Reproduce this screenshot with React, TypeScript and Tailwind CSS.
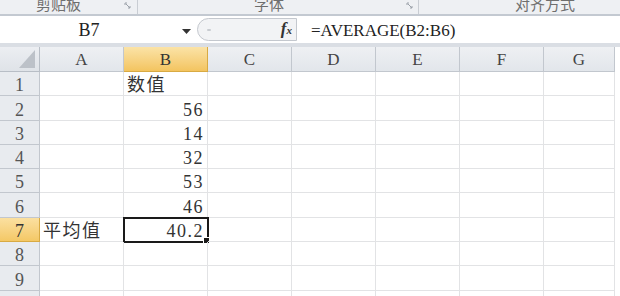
import React from "react";

const cols = ["A", "B", "C", "D", "E", "F", "G"];
const colW = [84, 84, 84, 84, 84, 84, 71];

type Cell = { text: string; align: "left" | "right" };
const data: Record<number, Record<string, Cell>> = {
  1: { B: { text: "数值", align: "left" } },
  2: { B: { text: "56", align: "right" } },
  3: { B: { text: "14", align: "right" } },
  4: { B: { text: "32", align: "right" } },
  5: { B: { text: "53", align: "right" } },
  6: { B: { text: "46", align: "right" } },
  7: { A: { text: "平均值", align: "left" }, B: { text: "40.2", align: "right" } },
};

function Launcher() {
  return (
    <svg width="7" height="7" viewBox="0 0 7 7" className="mt-[2px]">
      <path d="M1 1 H3 M1 1 V3" stroke="#9aa0a8" strokeWidth="1" fill="none" />
      <path d="M2 2 L6 6 M4 6 H6 V4" stroke="#9aa0a8" strokeWidth="1" fill="none" />
    </svg>
  );
}

export default function App() {
  const rows = [1, 2, 3, 4, 5, 6, 7, 8, 9, 10];
  return (
    <div className="w-[620px] h-[296px] overflow-hidden bg-white font-[Liberation_Serif,Noto_Sans_CJK_SC,serif]">
      {/* ribbon group labels */}
      <div className="h-[14px] flex bg-[#eef0f3] border-b-2 border-[#c3c9d1] box-content overflow-hidden font-[Noto_Sans_CJK_SC,sans-serif] text-[15px] text-[#6e6e6e]">
        <div className="w-[138px] flex border-r border-[#c9cdd3]">
          <div className="w-[117px] flex justify-center">
            <span className="leading-[15px] -mt-[4px]">剪贴板</span>
          </div>
          <div className="flex-1 flex justify-center">
            <Launcher />
          </div>
        </div>
        <div className="w-[281px] flex border-r border-[#c9cdd3]">
          <div className="w-[262px] flex justify-center">
            <span className="leading-[15px] -mt-[4px]">字体</span>
          </div>
          <div className="flex-1 flex justify-center">
            <Launcher />
          </div>
        </div>
        <div className="flex-1 flex pl-[96px]">
          <span className="leading-[15px] -mt-[4px]">对齐方式</span>
        </div>
      </div>

      {/* formula bar */}
      <div className="h-[27px] flex bg-white border-b-4 border-[#dadee4] box-content">
        <div className="w-[178px] flex items-center justify-center text-[18px] text-[#222] pt-[2px]">
          B7
        </div>
        <div className="w-[19px] flex items-center justify-start pl-[4px] pt-[3px]">
          <svg width="9" height="5" viewBox="0 0 9 5">
            <path d="M0 0 H9 L4.5 5 Z" fill="#333" />
          </svg>
        </div>
        <div className="w-[100px] my-[2px] flex items-center bg-[#f2f3f5] border border-[#c4c8ce] rounded-l-[14px] pl-[9px] pr-[4px]">
          <span className="w-[4px] h-[2px] bg-[#c8ccd1] rounded" />
          <span className="ml-auto italic font-bold text-[17px] text-[#333] leading-none pb-[2px]">
            f<span className="text-[11px]">x</span>
          </span>
        </div>
        <div className="flex-1 flex items-center pl-[14px] text-[17px] text-[#222] pt-[2px]">
          =AVERAGE(B2:B6)
        </div>
      </div>

      {/* column header */}
      <div className="h-[25px] flex">
        <div className="w-[40px] flex-none bg-gradient-to-b from-[#eceef2] to-[#dfe3e8] border-r border-b border-[#b8bec6] flex items-end justify-end pr-[4px] pb-[3px]">
          <svg width="16" height="18" viewBox="0 0 16 18">
            <path d="M16 0 V18 H0 Z" fill="#bcc1c8" />
          </svg>
        </div>
        {cols.map((c, i) => {
          const sel = c === "B";
          return (
            <div
              key={c}
              style={{ width: colW[i] }}
              className={`flex-none flex items-center justify-center text-[17px] pt-[1px] border-r border-b ${
                sel
                  ? "bg-gradient-to-b from-[#fbe3a6] to-[#f3c45f] border-[#d8aa43] text-[#333]"
                  : "bg-gradient-to-b from-[#eef0f3] to-[#e2e6eb] border-[#c2c7ce] text-[#444]"
              }`}
            >
              {c}
            </div>
          );
        })}
        <div className="flex-1 bg-white" />
      </div>

      {/* body rows */}
      {rows.map((r) => {
        const selRow = r === 7;
        return (
          <div key={r} className="h-[24.3px] flex">
            <div
              className={`w-[40px] flex-none flex items-end justify-center text-[18px] leading-[17px] border-r border-b ${
                selRow
                  ? "bg-gradient-to-b from-[#fbe0a0] to-[#f4c865] border-[#d8aa43] text-[#333]"
                  : "bg-[#e8ebef] border-[#c2c7ce] text-[#555]"
              }`}
            >
              <span className="pb-[1px]">{r}</span>
            </div>
            {cols.map((c, i) => {
              const cell = data[r]?.[c];
              const sel = r === 7 && c === "B";
              return (
                <div
                  key={c}
                  style={{ width: colW[i] }}
                  className={`relative flex-none flex items-end border-r border-b border-[#e2e3e5] text-[18px] tracking-[1.5px] leading-[17px] text-[#333] ${
                    cell?.align === "right" ? "justify-end pr-[3px]" : "justify-start pl-[3px]"
                  } ${sel ? "outline-2 outline-[#1a1a1a] -outline-offset-1" : ""}`}
                >
                  {cell ? <span className="pb-[1px]">{cell.text}</span> : null}
                  {sel ? (
                    <span className="absolute -right-[3px] -bottom-[3px] w-[5px] h-[5px] bg-[#1a1a1a] border border-white box-content" />
                  ) : null}
                </div>
              );
            })}
            <div className="flex-1 bg-white" />
          </div>
        );
      })}
    </div>
  );
}
